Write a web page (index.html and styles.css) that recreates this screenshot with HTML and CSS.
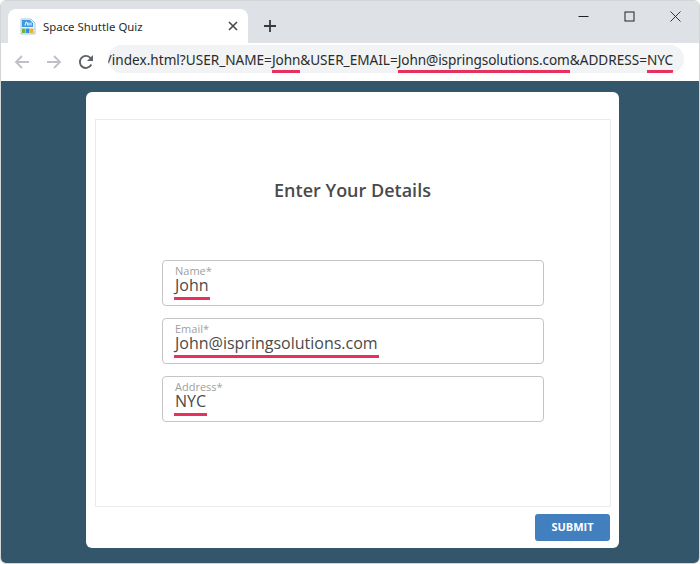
FILE: index.html
```html
<!DOCTYPE html>
<html lang="en">
<head>
<meta charset="utf-8">
<title>Space Shuttle Quiz</title>
<link rel="stylesheet" href="styles.css">
</head>
<body>
<div class="window">
  <header class="tabstrip">
    <div class="tab">
      <svg class="favicon" width="16" height="17" viewBox="0 0 16 17">
        <path d="M1 1h10l4 4v11H1z" fill="#eaf4fb" stroke="#a9c8e0" stroke-width="1"/>
        <path d="M2 2h8l3 3v4H2z" fill="#3d9ae0"/>
        <path d="M5 7.500l1.200-3.500h.6L8 7.500M9 4.500v3M11 4.500v3" stroke="#fff" stroke-width="1" fill="none"/>
        <rect x="2" y="10.500" width="3.500" height="4.500" fill="#6cb33f"/>
        <rect x="6" y="10.500" width="3.500" height="4.500" fill="#2f8fd8"/>
        <rect x="10" y="10.500" width="3.500" height="4.500" fill="#f2b02c"/>
      </svg>
      <span class="tab-title">Space Shuttle Quiz</span>
      <svg class="tab-close" width="10" height="10" viewBox="0 0 10 10"><path d="M1 1l8 8M9 1l-8 8" stroke="#45484c" stroke-width="1.600" fill="none"/></svg>
    </div>
    <svg class="newtab" width="14" height="14" viewBox="0 0 14 14"><path d="M7 1v12M1 7h12" stroke="#36393d" stroke-width="1.800" fill="none"/></svg>
    <div class="winctrl">
      <svg width="11" height="11" viewBox="0 0 11 11"><path d="M0.500 5.500h10" stroke="#222" stroke-width="1" fill="none"/></svg>
      <svg width="11" height="11" viewBox="0 0 11 11"><rect x="1" y="1" width="9" height="9" stroke="#222" stroke-width="1" fill="none"/></svg>
      <svg width="11" height="11" viewBox="0 0 11 11"><path d="M0.500 0.500l10 10M10.500 0.500l-10 10" stroke="#222" stroke-width="0.900" fill="none"/></svg>
    </div>
  </header>
  <nav class="toolbar">
    <svg class="navicon" width="16" height="16" viewBox="0 0 16 16"><path d="M15 8H2M8 2L2 8l6 6" stroke="#bdc0c4" stroke-width="1.800" fill="none"/></svg>
    <svg class="navicon" width="16" height="16" viewBox="0 0 16 16"><path d="M1 8h13M8 2l6 6-6 6" stroke="#bdc0c4" stroke-width="1.800" fill="none"/></svg>
    <svg class="navicon" width="16" height="16" viewBox="0 0 16 16"><path d="M13.300 10.500A6 6 0 1 1 12.600 4.200" stroke="#5f6368" stroke-width="1.900" fill="none"/><path d="M15 1v6H9z" fill="#5f6368"/></svg>
    <div class="omnibox"><span class="url">/index.html?USER_NAME=<span class="mark">John</span>&amp;USER_EMAIL=<span class="mark">John@ispringsolutions.com</span>&amp;ADDRESS=<span class="mark">NYC</span></span></div>
  </nav>
  <main class="stage">
    <section class="card">
      <div class="panel">
        <h1 class="heading">Enter Your Details</h1>
        <form class="fields">
          <div class="field"><span class="label">Name*</span><span class="value"><span class="mark">John</span></span></div>
          <div class="field"><span class="label">Email*</span><span class="value"><span class="mark">John@ispringsolutions.com</span></span></div>
          <div class="field"><span class="label">Address*</span><span class="value"><span class="mark">NYC</span></span></div>
        </form>
      </div>
      <div class="actions"><button class="submit" type="button">SUBMIT</button></div>
    </section>
  </main>
</div>
</body>
</html>
```
FILE: styles.css
```css
* { box-sizing: border-box; }
html, body { margin: 0; padding: 0; background: #fff; }
.window {
  width: 700px; height: 564px; display: flex; flex-direction: column;
  border: 1px solid #d4d5d7; border-radius: 6px; overflow: hidden;
}
.tabstrip { height: 42px; background: #dee1e6; display: flex; align-items: flex-end; padding-left: 7px; flex: none; }
.tab {
  width: 240px; height: 34px; background: #fff; border-radius: 8px 8px 0 0;
  display: flex; align-items: center; padding: 0 10px 0 12px;
}
.favicon { flex: none; }
.tab-title { font: 11.400px "Noto Sans", sans-serif; color: #2b2b2b; margin-left: 7px; flex: 1; }
.tab-close { flex: none; }
.newtab { margin: 0 0 10px 15px; }
.winctrl { margin-left: auto; align-self: flex-start; display: flex; gap: 35px; padding: 10px 18px 0 0; }
.toolbar { height: 38px; background: #fff; display: flex; align-items: center; padding: 0 15px 0 13px; flex: none; }
.navicon { flex: none; margin-right: 16px; }
.navicon:nth-child(3) { margin-right: 14px; }
.omnibox {
  flex: 1; min-width: 0; height: 28px; margin-top: -6px; background: #f1f3f4; border-radius: 14px;
  display: flex; justify-content: flex-end; align-items: flex-end; overflow: hidden; padding-right: 11px;
}
.url { font: 13.600px/20px "Noto Sans", sans-serif; color: #2b2b2b; white-space: nowrap; flex: none; }
.mark { border-bottom: 3px solid #e8305f; display: inline-block; }
.url .mark { line-height: 20px; letter-spacing: -0.1px; }
.stage { flex: 1; background: #34566a; display: flex; justify-content: center; align-items: flex-start; padding: 11px 0 0 5px; }
.card { width: 533px; height: 456px; background: #fff; border-radius: 6px; padding: 27px 8px 0 9px; display: flex; flex-direction: column; }
.panel { height: 388px; border: 1px solid #ebebeb; padding-top: 59px; }
.heading { margin: 0; text-align: center; font: 600 18px/22px "Open Sans", sans-serif; color: #4a4a4a; padding-right: 1px; }
.fields { margin-top: 59px; padding: 0 66px; display: flex; flex-direction: column; gap: 12px; }
.field { height: 46px; border: 1px solid #c4c4c4; border-radius: 4px; padding: 4px 12px 0; display: flex; flex-direction: column; align-items: flex-start; }
.label { font: 11px/11px "Open Sans", sans-serif; color: #a0a0a0; }
.value { font: 16px/18px "Open Sans", sans-serif; color: #4a4a4a; }
.value .mark { padding: 0 1px 3px; margin-left: -1px; line-height: 18px; }
.actions { display: flex; justify-content: flex-end; padding: 7px 1px 0 0; }
.submit { width: 75px; height: 27px; background: #427fbf; border: 0; border-radius: 3px; color: #fff; font: 700 11px "Open Sans", sans-serif; padding: 0 0 2px; }
```
